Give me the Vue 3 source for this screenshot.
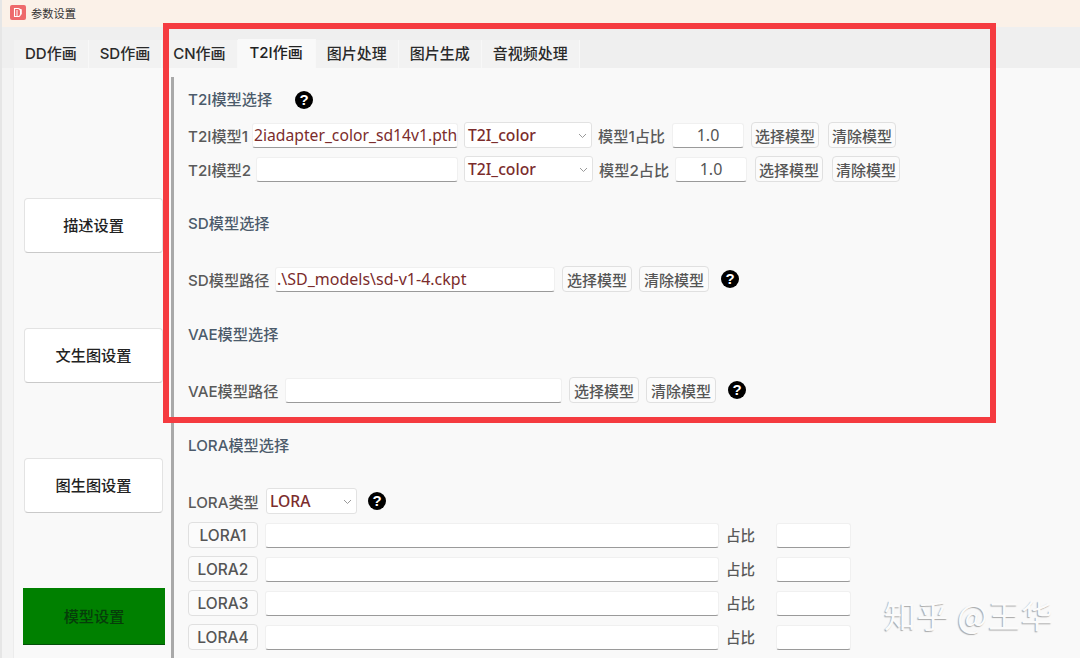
<script setup>
const tabs = ['DD作画', 'SD作画', 'CN作画', 'T2I作画', '图片处理', '图片生成', '音视频处理']
const sideButtons = ['描述设置', '文生图设置', '图生图设置']
const loras = ['LORA1', 'LORA2', 'LORA3', 'LORA4']
</script>

<template>
  <div class="window">
    <header class="titlebar">
      <svg class="app-icon" width="16" height="15" viewBox="0 0 16 15">
        <rect width="16" height="15" rx="2" fill="#ee6a6c" />
        <path d="M4.5 3.5h3.5a2.5 2.5 0 0 1 2.5 2.5v3a2.5 2.5 0 0 1-2.5 2.5H4.5z" fill="none" stroke="#fff" stroke-width="1.1" />
        <path d="M7 5v6.5M9.500 4.500h1.800v5" fill="none" stroke="#fff" stroke-width="1" />
      </svg>
      <span class="title">参数设置</span>
    </header>

    <nav class="tabbar">
      <div
        v-for="t in tabs"
        :key="t"
        class="tab"
        :class="{ active: t === 'T2I作画' }"
      >{{ t }}</div>
    </nav>

    <div class="main">
      <aside class="sidebar">
        <button v-for="b in sideButtons" :key="b" class="side-btn">{{ b }}</button>
        <button class="side-btn green">模型设置</button>
      </aside>

      <section class="content">
        <div class="row heading-row">
          <span class="heading w-h">T2I模型选择</span>
          <span class="help h-t2i">?</span>
        </div>

        <div class="row r-first">
          <span class="label l-60">T2I模型1</span>
          <div class="input w-m1 path">2iadapter_color_sd14v1.pth</div>
          <div class="select w-sel">T2I_color
            <svg class="chev" width="9" height="6" viewBox="0 0 9 6"><path d="M1 1l3.5 3.5L8 1" fill="none" stroke="#999" /></svg>
          </div>
          <span class="label l-68">模型1占比</span>
          <div class="input w-ratio ratio">1.0</div>
          <button class="btn w-b m-1">选择模型</button>
          <button class="btn w-b m-3">清除模型</button>
        </div>

        <div class="row r-next">
          <span class="label l-62">T2I模型2</span>
          <div class="input w-m2"></div>
          <div class="select w-sel2">T2I_color
            <svg class="chev" width="9" height="6" viewBox="0 0 9 6"><path d="M1 1l3.5 3.5L8 1" fill="none" stroke="#999" /></svg>
          </div>
          <span class="label l-70">模型2占比</span>
          <div class="input w-ratio ratio">1.0</div>
          <button class="btn w-b m-2">选择模型</button>
          <button class="btn w-b m-3">清除模型</button>
        </div>

        <div class="row r-sec">
          <span class="heading">SD模型选择</span>
        </div>
        <div class="row r-sec">
          <span class="label l-80">SD模型路径</span>
          <div class="input w-sd path sd-path">.\SD_models\sd-v1-4.ckpt</div>
          <button class="btn w-b2">选择模型</button>
          <button class="btn w-b2">清除模型</button>
          <span class="help h-side">?</span>
        </div>

        <div class="row r-sec2">
          <span class="heading">VAE模型选择</span>
        </div>
        <div class="row r-sec">
          <span class="label l-91">VAE模型路径</span>
          <div class="input w-vae"></div>
          <button class="btn w-b2">选择模型</button>
          <button class="btn w-b2">清除模型</button>
          <span class="help h-side">?</span>
        </div>

        <div class="row r-sec2">
          <span class="heading">LORA模型选择</span>
        </div>
        <div class="row r-sec">
          <span class="label l-72">LORA类型</span>
          <div class="select w-lora">LORA
            <svg class="chev" width="9" height="6" viewBox="0 0 9 6"><path d="M1 1l3.5 3.5L8 1" fill="none" stroke="#999" /></svg>
          </div>
          <span class="help h-lora">?</span>
        </div>

        <div v-for="l in loras" :key="l" class="row r-next lora-row">
          <button class="btn w-lbtn">{{ l }}</button>
          <div class="input w-lpath"></div>
          <span class="label w-ll">占比</span>
          <div class="input w-lratio"></div>
        </div>
      </section>
    </div>

    <div class="highlight"></div>
    <div class="watermark">知乎 @王华</div>
  </div>
</template>

<style>
html, body { margin: 0; padding: 0; overflow: hidden; background: #f9f9f9; }
</style>

<style scoped>
.window {
  position: relative;
  width: 1080px;
  height: 658px;
  overflow: hidden;
  background: #f4f4f4;
  font-family: Inter, "Noto Sans CJK SC", sans-serif;
  font-size: 15.2px;
  font-weight: 500;
  color: #555;
  border-left: 2px solid #e6e6e6;
  box-sizing: border-box;
}
.titlebar {
  height: 27px;
  background: #fbf1e8;
  display: flex;
  align-items: center;
  padding: 0 0 2px 8px;
  box-sizing: border-box;
  gap: 5px;
}
.app-icon { flex: none; }
.title { font-size: 11.25px; font-weight: 400; color: #333; }
.tabbar {
  height: 41px;
  background: #efefef;
  padding: 13px 0 0 12px;
  box-sizing: border-box;
  display: flex;
  align-items: flex-end;
}
.tab {
  height: 28px;
  line-height: 28px;
  padding: 0 11px;
  font-size: 15px;
  background: #f2f2f2;
  border-right: 1px solid #f8f8f8;
  color: #2a2a2a;
  box-sizing: border-box;
  white-space: nowrap;
}
.tab.active {
  height: 29px;
  line-height: 27px;
  padding: 0 12px;
  background: #f9f9f9;
  color: #222;
}
.main { display: flex; height: 590px; margin-left: 12px; background: #f9f9f9; }
.sidebar {
  width: 157px;
  padding: 130px 0 0 10px;
  box-sizing: border-box;
  display: flex;
  flex-direction: column;
  gap: 75px;
  flex: none;
  box-shadow: -1px 0 0 #ececec;
}
.side-btn {
  width: 139px;
  height: 55px;
  background: #fff;
  border: 1px solid #e3e3e3;
  border-bottom-color: #c9c9c9;
  border-radius: 4px;
  font: inherit;
  color: #222;
  padding: 0 0 3px;
}
.side-btn.green {
  width: 142px;
  height: 57px;
  margin-left: -1px;
  background: #008000;
  border: 0;
  border-bottom: 1px solid #04500a;
  border-radius: 0;
  color: #063d0a;
}
.content {
  flex: 1;
  margin-top: 9px;
  border-left: 3px solid #a9a9a9;
  padding: 10px 0 0 14px;
  display: flex;
  flex-direction: column;
}
.row { height: 26px; display: flex; align-items: center; flex: none; gap: 7px; }
.heading-row { gap: 0; }
.r-first { margin-top: 9px; gap: 6px; }
.r-next { margin-top: 8px; gap: 6px; }
.r-sec { margin-top: 29px; }
.r-sec2 { margin-top: 30px; }
.heading { color: #4c5b6b; line-height: 22px; white-space: nowrap; }
.w-h { width: 83px; }
.label { color: #5a5a5a; white-space: nowrap; flex: none; padding-bottom: 1px; }
.l-60 { width: 60px; }
.l-62 { width: 62px; }
.l-68 { width: 68px; }
.l-70 { width: 70px; }
.l-72 { width: 72px; }
.l-80 { width: 80px; }
.l-91 { width: 91px; }
.input {
  height: 25px;
  box-sizing: border-box;
  background: #fff;
  border: 1px solid #f0f0f0;
  border-bottom: 1px solid #9a9a9a;
  border-radius: 3px;
  line-height: 23px;
  flex: none;
  overflow: hidden;
  white-space: nowrap;
}
.path { font-size: 15.700px; color: #7b2c2c; padding-left: 1px; font-family: "Noto Sans", "Noto Sans CJK SC", sans-serif; font-weight: 400; }
.sd-path { font-size: 16px; line-height: 22px; }
.ratio { text-align: center; font-size: 16px; color: #555; font-family: "Noto Sans", sans-serif; font-weight: 400; }
.select {
  position: relative;
  height: 26px;
  box-sizing: border-box;
  background: #fff;
  border: 1px solid #e2e2e2;
  border-radius: 3px;
  padding-left: 3px;
  line-height: 24px;
  font-family: "Noto Sans", sans-serif;
  font-size: 15.700px;
  color: #7b2c2c;
  font-weight: 500;
  flex: none;
}
.chev { position: absolute; right: 4px; top: 10px; }
.btn {
  height: 26px;
  box-sizing: border-box;
  background: #fbfbfb;
  border: 1px solid #e0e0e0;
  border-radius: 4px;
  font: inherit;
  font-size: 15px;
  color: #555;
  padding: 0;
  flex: none;
  white-space: nowrap;
}
.m-1 { margin-left: 1px; }
.m-2 { margin-left: 2px; }
.m-3 { margin-left: 3px; }
.w-m1 { width: 206px; margin-left: -2px; }
.w-m2 { width: 202px; }
.w-sel { width: 128px; }
.w-sel2 { width: 129px; }
.w-ratio { width: 72px; }
.w-b { width: 68px; }
.w-b2 { width: 70px; }
.w-sd { width: 280px; }
.w-vae { width: 277px; margin-left: -1px; }
.w-lora { width: 91px; margin-left: -1px; }
.w-lbtn { width: 70px; font-size: 15.500px; }
.w-lpath { width: 454px; }
.w-ll { width: 29px; font-size: 14.500px; }
.w-lratio { width: 75px; margin-left: 14px; }
.lora-row { gap: 7px; }
.help {
  width: 18px;
  height: 18px;
  border-radius: 50%;
  background: #000;
  color: #fff;
  font-family: "Liberation Sans", sans-serif;
  font-size: 15px;
  font-weight: 700;
  line-height: 18px;
  text-align: center;
  flex: none;
}
.h-t2i { margin-left: 24px; }
.h-side { margin-left: 5px; }
.h-lora { margin-left: 4px; }
.highlight {
  position: absolute;
  left: 161px;
  top: 23px;
  width: 833px;
  height: 400px;
  box-sizing: border-box;
  border: 6px solid #f53b40;
  pointer-events: none;
}
.watermark {
  position: absolute;
  left: 882px;
  top: 594px;
  font-family: "Noto Sans CJK SC", sans-serif;
  font-size: 32px;
  line-height: 40px;
  letter-spacing: 0.7px;
  font-weight: 400;
  color: #fbfbfb;
  text-shadow: -1px 1px 1px #a9a9a9;
  white-space: nowrap;
}
</style>
